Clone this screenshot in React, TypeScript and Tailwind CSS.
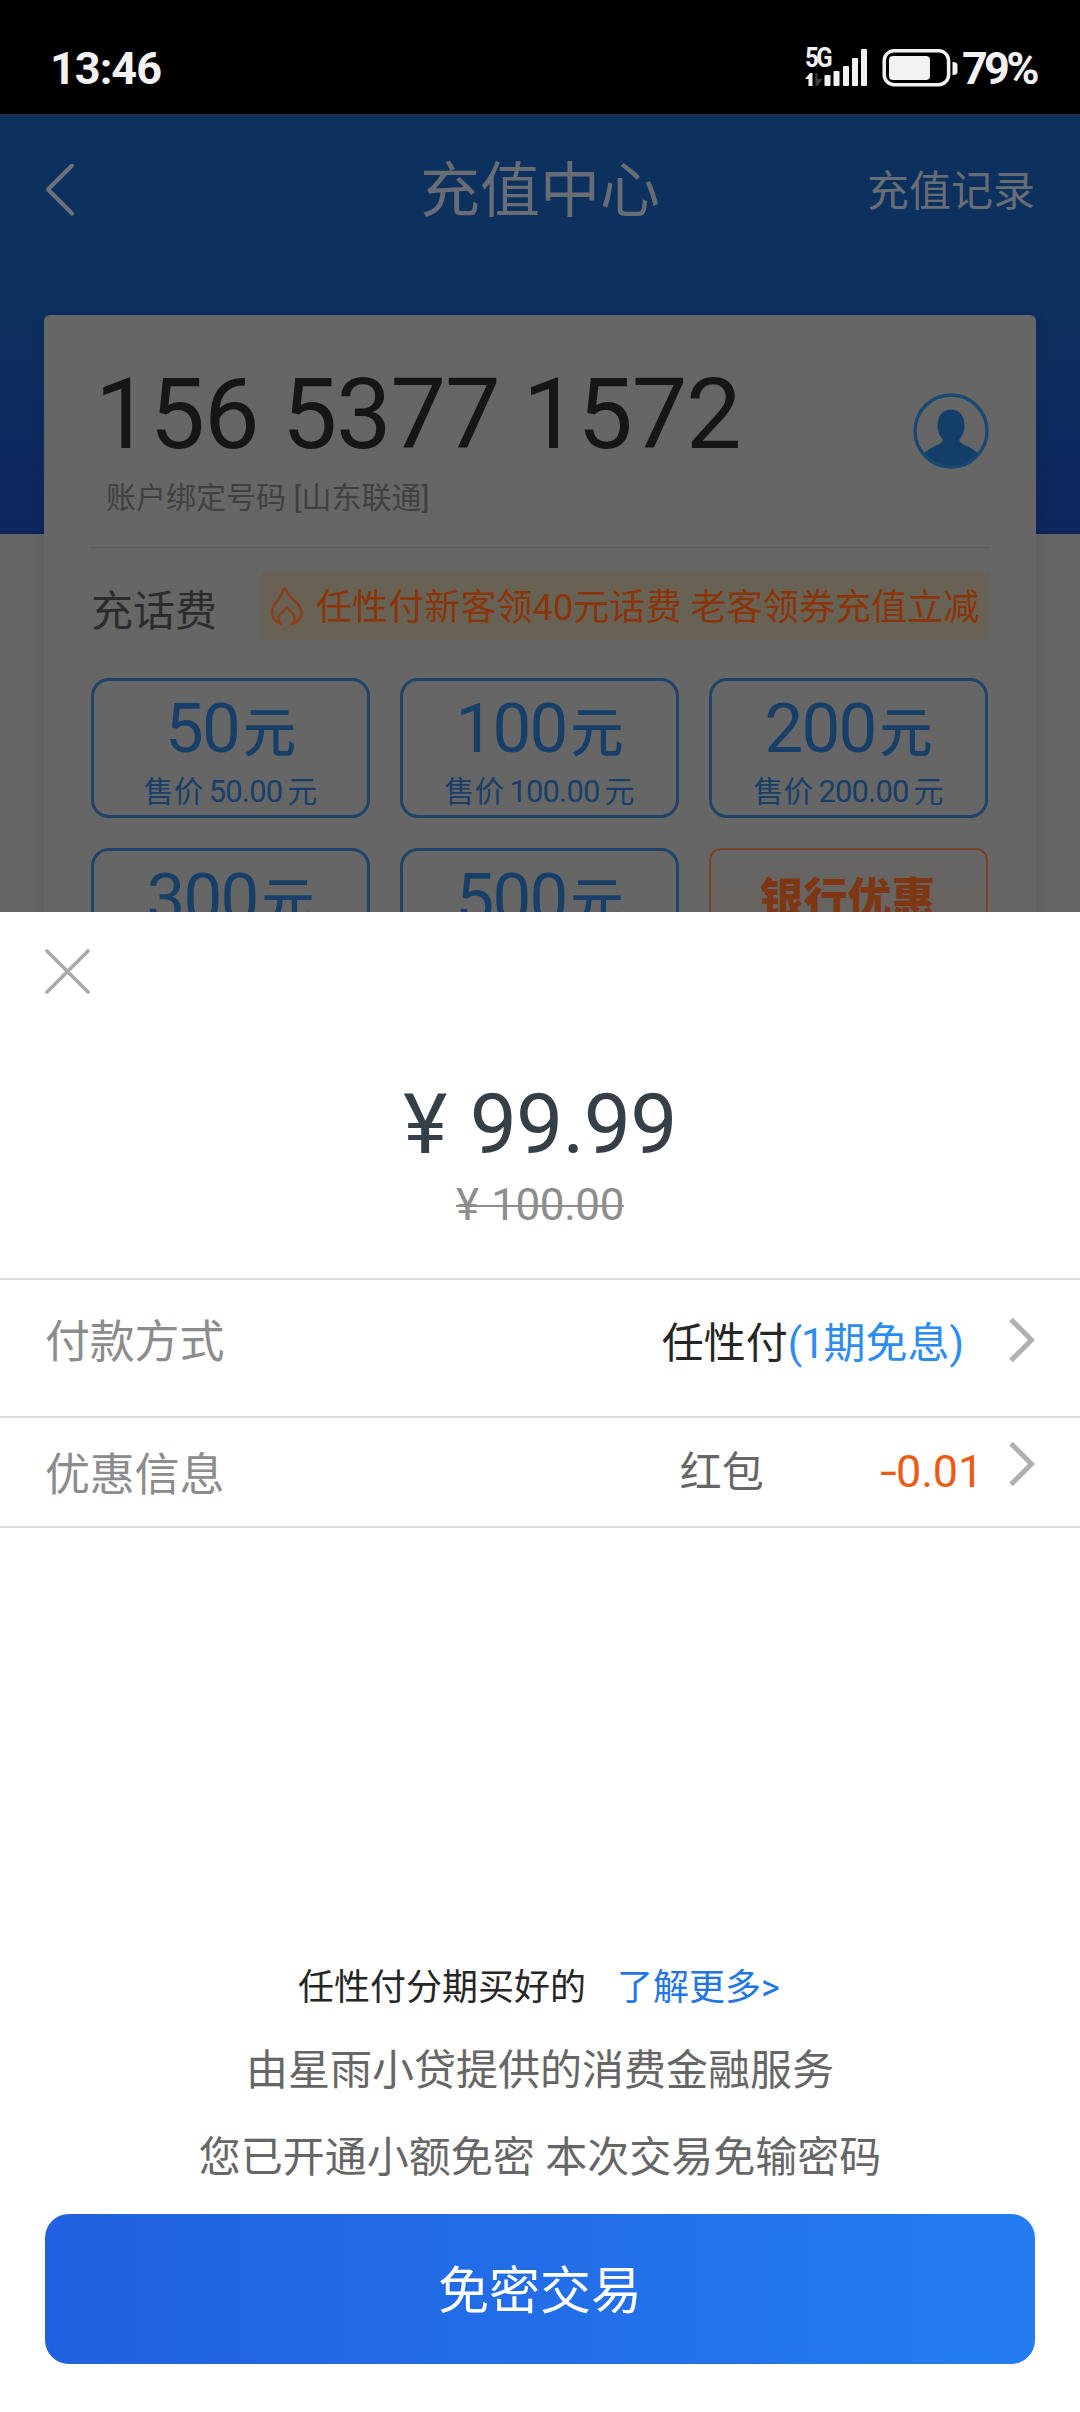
import React from "react";

function StatusBar() {
  return (
    <div className="flex h-[114px] shrink-0 items-start bg-black text-[#f2f2f2]">
      <span className="ml-[50px] mt-[43px] text-[45px] font-bold leading-[52px] tracking-[-1px]">13:46</span>
      <div className="ml-auto mt-[47px] w-[27px]">
        <div className="origin-left scale-y-115 text-[24px] font-bold leading-[22px] tracking-[-2.5px]">5G</div>
        <svg className="mt-[3px] block" width="20" height="15" viewBox="0 0 20 15">
          <path d="M0 7 L5 1 H7.5 V14 H3.5 V7 Z" fill="#f2f2f2" />
          <path d="M10.5 1 H12.5 V7 H18 L12.5 14 H10.5 Z" fill="#3d3d3d" />
        </svg>
      </div>
      <svg className="-ml-[8px] mt-[49px] block" width="138" height="38" viewBox="0 0 138 38" fill="#f2f2f2">
        <rect x="0.5" y="26" width="6" height="11" rx="1" />
        <rect x="9.5" y="22" width="6" height="15" rx="1" />
        <rect x="19" y="17" width="6" height="20" rx="1" />
        <rect x="28" y="9" width="6" height="28" rx="1" />
        <rect x="37" y="0" width="6" height="37" rx="1" />
        <rect x="60.2" y="1.7" width="64.4" height="34" rx="10" fill="none" stroke="#f2f2f2" strokeWidth="3.5" />
        <rect x="65" y="7" width="41" height="24" rx="4" />
        <path d="M128.5 13 q5 0 5 3 v7 q0 3 -5 3 z" />
      </svg>
      <span className="mr-[42px] mt-[43px] w-[76px] whitespace-nowrap text-[45px] font-bold leading-[52px] tracking-[-3.7px]">79%</span>
    </div>
  );
}

function Avatar() {
  return (
    <svg className="mr-[47px] mt-[78px] block" width="76" height="76" viewBox="0 0 76 76">
      <circle cx="38" cy="38" r="36" fill="none" stroke="#194872" strokeWidth="3.4" />
      <path
        d="M38 16.500 C46.500 16.500 51.500 23 51.500 32 C51.500 39.500 49 43.500 46.500 46 C46 50 50 51 55 53.500 C59 55.500 62.500 57.500 65 60.500 A36 36 0 0 1 11 60.500 C13.500 57.500 17 55.500 21 53.500 C26 51 30 50 29.500 46 C27 43.500 24.500 39.500 24.500 32 C24.500 23 29.500 16.500 38 16.500 Z"
        fill="#133f69"
      />
    </svg>
  );
}

function Flame() {
  return (
    <svg className="block" width="34" height="40" viewBox="0 0 34 40" fill="none" stroke="#8a3f1c" strokeWidth="2.6" strokeLinejoin="round" strokeLinecap="round">
      <path d="M11 38 C5.500 36 2 31.500 2 26 C2 20 6 17 9 12.500 C11.500 8.500 12.500 5.500 14.500 2 C16.500 4.500 17 7.500 20.500 11 C26 16 31.500 20.500 31.500 27 C31.500 32 27.500 36.500 21.500 38 C24 36 25.500 33.500 24.500 30.500 C23.500 27 19.500 24.500 16.500 21 C14 25 9.500 28 8.500 31.500 C8 34 9 36.500 11 38 Z" />
    </svg>
  );
}

function Amount({ value, price }: { value: string; price?: string }) {
  return (
    <div className="flex h-[140px] flex-col items-center rounded-[18px] border-3 border-[#1f4468] text-[#173f68]">
      <div className="mt-[11px] flex h-[74px] items-baseline whitespace-nowrap leading-[74px]">
        <span className="text-[69px] tracking-[-1.8px]">{value}</span>
        <span className="ml-[4px] text-[53px] font-medium">元</span>
      </div>
      {price && (
        <div className="mt-[7px] flex items-baseline whitespace-nowrap text-[30px] leading-[38px]">
          <span>售价</span>
          <span className="mx-[5px] text-[31px] tracking-[-0.9px]">{price}</span>
          <span>元</span>
        </div>
      )}
    </div>
  );
}

function Chevron() {
  return (
    <svg className="block" width="28" height="46" viewBox="0 0 28 46" fill="none" stroke="#b0b0b0" strokeWidth="5">
      <path d="M2 2.500 L22.500 23 L2 43.500" />
    </svg>
  );
}

function RechargePage() {
  return (
    <div className="flex h-[798px] shrink-0 flex-col overflow-hidden bg-[#646464]">
      <div className="h-[420px] shrink-0 border-t-2 border-[#1b3350] bg-[linear-gradient(180deg,#0d315f_0%,#0d315f_42%,#0f255e_100%)]">
        <div className="flex h-[148px] items-center pl-[45px] pr-[45px] text-[#686c74]">
          <svg className="block" width="30" height="52" viewBox="0 0 30 52" fill="none" stroke="#6f7178" strokeWidth="4" strokeLinecap="round" strokeLinejoin="round">
            <path d="M27 1.500 L3 25.500 L27 49.500" />
          </svg>
          <h1 className="ml-[345px] mt-[4px] text-[60px] leading-[72px]">充值中心</h1>
          <span className="ml-auto mt-[3px] text-[42px] leading-[50px]">充值记录</span>
        </div>
      </div>
      <section className="mx-[44px] -mt-[219px] h-[700px] rounded-t-[6px] bg-[#666] shadow-[0_0_16px_rgba(0,0,0,0.07)]">
        <div className="flex h-[232px]">
          <div className="flex-1">
            <div className="ml-[51px] mt-[41px] whitespace-nowrap text-[99px] leading-[116px] tracking-[-1.2px] text-[#161616]">156 5377 1572</div>
            <div className="ml-[62px] mt-[7px] text-[30px] leading-[38px] text-[#404040]">账户绑定号码 [山东联通]</div>
          </div>
          <Avatar />
        </div>
        <div className="mx-[46px] h-px bg-[#5a5a5a]" />
        <div className="mt-[24px] flex h-[68px] items-center">
          <h2 className="ml-[47px] mt-[11px] w-[170px] text-[42px] leading-[50px] text-[#2c2c2c]">充话费</h2>
          <div className="flex h-[68px] w-[728px] items-center bg-[#686254] pl-[9px]">
            <Flame />
            <span className="ml-[12px] mt-[4px] whitespace-nowrap text-[36px] leading-[44px] tracking-[0.1px] text-[#8b3409]">任性付新客领40元话费 老客领券充值立减</span>
          </div>
        </div>
        <div className="ml-[47px] mt-[38px] grid w-[897px] grid-cols-3 gap-[30px]">
          <Amount value="50" price="50.00" />
          <Amount value="100" price="100.00" />
          <Amount value="200" price="200.00" />
          <Amount value="300" />
          <Amount value="500" />
          <div className="h-[140px] rounded-[12px] border-2 border-[#7a4226] bg-[linear-gradient(180deg,#666_0%,#68625e_60%,#6a5f57_100%)] pt-[22px] pr-[2px] text-center text-[44px] font-black leading-[56px] text-[#7f3713]">
            银行优惠
          </div>
        </div>
      </section>
    </div>
  );
}

function PaySheet() {
  return (
    <div className="flex flex-1 flex-col bg-white">
      <svg className="ml-[45px] mt-[37px] block shrink-0" width="46" height="46" viewBox="0 0 46 46" fill="none" stroke="#aaaaaa" strokeWidth="3.6" strokeLinecap="round">
        <path d="M2 2 L43 43 M43 2 L2 43" />
      </svg>
      <div className="mt-[80px] text-center text-[84px] leading-[100px] tracking-[-0.8px] [word-spacing:3px] text-[#353f48]">¥ 99.99</div>
      <div className="mt-[4px] flex justify-center">
        <span className="text-[44px] leading-[52px] tracking-[-0.4px] [word-spacing:2px] text-[#8d8d8d] line-through decoration-2">¥ 100.00</span>
      </div>
      <div className="mt-[47px] flex h-[138px] border-t-2 border-[#dcdcdc] pl-[45px] pr-[43px]">
        <span className="mt-[36px] text-[45px] leading-[54px] tracking-[-0.2px] text-[#8c8c8c]">付款方式</span>
        <span className="ml-auto mt-[39px] text-[42px] leading-[50px] text-[#262626]">
          任性付<span className="text-[#2d8cf0]"><span className="tracking-[-1.2px]">(1</span>期免息)</span>
        </span>
        <span className="ml-[45px] mt-[37px]"><Chevron /></span>
      </div>
      <div className="flex h-[112px] border-y-2 border-[#dcdcdc] pl-[45px] pr-[43px]">
        <span className="mt-[31px] text-[45px] leading-[54px] tracking-[-0.2px] text-[#8c8c8c]">优惠信息</span>
        <span className="ml-auto mt-[30px] text-[42px] leading-[50px] text-[#666]">红包</span>
        <span className="ml-[116px] mt-[28px] flex text-[45px] leading-[52px] tracking-[-0.2px] text-[#ec5b14]">
          <span className="mr-[4px] inline-block origin-left scale-x-135">-</span>0.01
        </span>
        <span className="ml-[26px] mt-[23px]"><Chevron /></span>
      </div>
      <div className="mt-auto flex flex-col items-center">
        <div className="mr-[2px] flex gap-[31px] text-[36px] leading-[44px] text-[#262626]">
          <span>任性付分期买好的</span>
          <span className="text-[#2275e6]">了解更多&gt;</span>
        </div>
        <div className="mt-[36px] text-[42px] leading-[50px] text-[#666]">由星雨小贷提供的消费金融服务</div>
        <div className="mt-[37px] text-[42px] leading-[50px] text-[#666]">您已开通小额免密 本次交易免输密码</div>
      </div>
      <button className="mx-[45px] mb-[48px] mt-[31px] h-[150px] shrink-0 rounded-[24px] bg-[linear-gradient(90deg,#2160e0,#247cf0)] pt-[5px] text-[51px] leading-[60px] text-white">免密交易</button>
    </div>
  );
}

export default function App() {
  return (
    <main className="flex h-[2412px] w-[1080px] flex-col overflow-hidden font-[Roboto,'Noto_Sans_CJK_SC',sans-serif]">
      <StatusBar />
      <RechargePage />
      <PaySheet />
    </main>
  );
}
